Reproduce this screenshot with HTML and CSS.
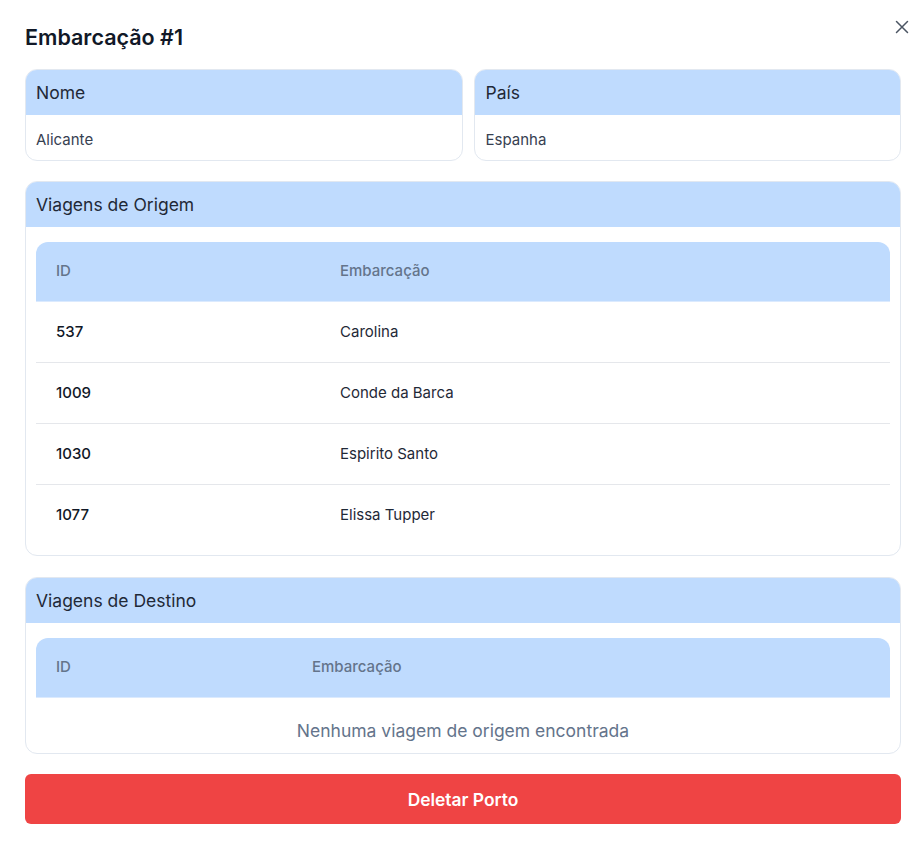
FILE: index.html
```html
<!DOCTYPE html>
<html lang="pt">
<head>
<meta charset="utf-8">
<link rel="stylesheet" href="styles.css">
</head>
<body>
<div class="modal">
  <button class="close" aria-label="Fechar">
    <svg width="14" height="14" viewBox="0 0 14 14"><path d="M1.5 1.5 L12.5 12.5 M12.5 1.5 L1.5 12.5" stroke="#4b5563" stroke-width="1.5" stroke-linecap="round" fill="none"/></svg>
  </button>
  <h1 class="title">Embarcação #1</h1>
  <div class="info-grid">
    <div class="card">
      <div class="card-head">Nome</div>
      <div class="card-body">Alicante</div>
    </div>
    <div class="card">
      <div class="card-head">País</div>
      <div class="card-body">Espanha</div>
    </div>
  </div>

  <div class="card section">
    <div class="card-head">Viagens de Origem</div>
    <div class="table-wrap">
      <table class="trips">
        <thead>
          <tr><th class="col-id wide">ID</th><th>Embarcação</th></tr>
        </thead>
        <tbody>
          <tr><td class="id">537</td><td>Carolina</td></tr>
          <tr><td class="id">1009</td><td>Conde da Barca</td></tr>
          <tr><td class="id">1030</td><td>Espirito Santo</td></tr>
          <tr><td class="id">1077</td><td>Elissa Tupper</td></tr>
        </tbody>
      </table>
    </div>
  </div>

  <div class="card section">
    <div class="card-head">Viagens de Destino</div>
    <div class="table-wrap">
      <table class="trips">
        <thead>
          <tr><th class="col-id narrow">ID</th><th>Embarcação</th></tr>
        </thead>
        <tbody>
          <tr><td class="empty" colspan="2">Nenhuma viagem de origem encontrada</td></tr>
        </tbody>
      </table>
    </div>
  </div>

  <button class="delete">Deletar Porto</button>
</div>
</body>
</html>
```
FILE: styles.css
```css
* { box-sizing: border-box; }
html, body { margin: 0; padding: 0; background: #ffffff; }
body {
  font-family: Inter, "Noto Sans", "Liberation Sans", sans-serif;
  color: #1f2937;
}
.modal {
  position: relative;
  padding: 23px 22px 22px 25px;
  display: flex;
  flex-direction: column;
  gap: 21px;
}
.close {
  position: absolute;
  top: 20px;
  right: 14px;
  width: 14px;
  height: 14px;
  padding: 0;
  border: 0;
  background: none;
  display: flex;
}
.title {
  margin: 0 0 -3px 0;
  font-size: 21.5px;
  line-height: 28px;
  font-weight: 600;
  color: #111827;
}
.info-grid {
  display: grid;
  grid-template-columns: 439fr 427fr;
  gap: 11px;
  margin-bottom: -1px;
}
.card {
  border: 1px solid #e2e8f0;
  border-radius: 12px;
  overflow: hidden;
  background: #fff;
}
.card-head {
  background: #bfdbfe;
  height: 45px;
  padding: 1px 10px 0;
  line-height: 44px;
  font-size: 17.5px;
  color: #1f2937;
}
.card-body {
  height: 45px;
  line-height: 40px;
  padding: 5px 10px 0;
  font-size: 15px;
  color: #374151;
}
.table-wrap {
  padding: 15px 10px 10px 10px;
}
.trips {
  width: 100%;
  border-collapse: separate;
  border-spacing: 0;
  table-layout: fixed;
  font-size: 15px;
}
.trips th {
  background: #bfdbfe;
  text-align: left;
  font-weight: 500;
  color: #64748b;
  padding: 19px 20px 20px;
  line-height: 20px;
  border-bottom: 1px solid #dbeafe;
}
.trips th:first-child { border-top-left-radius: 12px; }
.trips th:last-child { border-top-right-radius: 12px; }
.col-id.wide { width: 284px; }
.col-id.narrow { width: 256px; }
.trips td {
  padding: 20px 20px 20px;
  line-height: 20px;
  color: #1f2937;
}
.trips tbody tr + tr td { border-top: 1px solid #e5e7eb; }
.trips td.id { color: #111827; font-weight: 500; }
.trips td.empty {
  text-align: center;
  font-size: 17.5px;
  color: #64748b;
  padding: 21px 20px 0;
  line-height: 24px;
}
.delete {
  margin-top: -1px;
  height: 50px;
  border: 0;
  border-radius: 6px;
  background: #ef4444;
  color: #ffffff;
  font-family: inherit;
  font-size: 17.4px;
  font-weight: 600;
}
```
